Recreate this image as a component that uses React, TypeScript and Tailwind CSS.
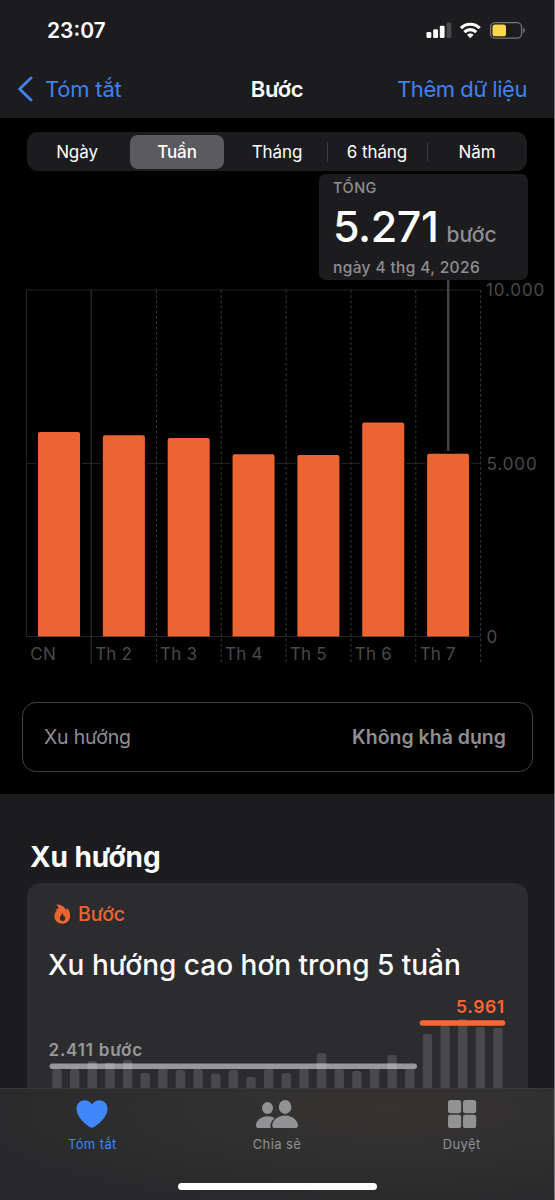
import React from 'react';

const ranges = ['Ngày', 'Tuần', 'Tháng', '6 tháng', 'Năm'];

const days = [
  { label: 'CN', steps: 5900 },
  { label: 'Th 2', steps: 5810 },
  { label: 'Th 3', steps: 5730 },
  { label: 'Th 4', steps: 5260 },
  { label: 'Th 5', steps: 5235 },
  { label: 'Th 6', steps: 6175 },
  { label: 'Th 7', steps: 5271 },
];

// top edge of every weekly bar, measured inside the card chart
const trendTops = [
  69, 69, 61, 63, 60, 73, 67, 70, 69, 73.5, 70, 77, 69, 73, 66, 53, 69, 71, 66, 55, 67, 34, 25, 19, 27, 28,
];

const StatusBar = () => (
  <div className="flex h-[60px] items-center justify-between pl-[47px] pr-[28px]">
    <span className="text-[21px] font-semibold leading-none">23:07</span>
    <svg width="100" height="20" viewBox="0 0 100 20" fill="#fff">
      <rect x="0.5" y="12" width="4.8" height="6" rx="1.3" />
      <rect x="7.2" y="9.3" width="4.8" height="8.7" rx="1.3" />
      <rect x="13.8" y="5.8" width="4.8" height="12.2" rx="1.3" />
      <rect x="20.5" y="2.5" width="4.8" height="15.5" rx="1.3" fill="#48484a" />
      <g fill="none" stroke="#fff" strokeWidth="3.2">
        <path d="M34.9 8.1a13.4 13.4 0 0 1 18.8 0" />
        <path d="M38.4 12.1a8.4 8.4 0 0 1 11.8 0" />
      </g>
      <path d="M41 14.8a4.8 4.8 0 0 1 6.6 0L44.3 18.200z" />
      <rect x="64.6" y="2.6" width="31" height="15.6" rx="4.5" fill="none" stroke="#77777a" strokeWidth="1.3" />
      <rect x="66.500" y="4.500" width="13.500" height="11.800" rx="2.600" fill="#fad84a" />
      <path d="M97.2 7.8c2.2.7 2.2 4.5 0 5.2z" fill="#77777a" />
    </svg>
  </div>
);

const NavBar = () => (
  <div className="grid h-[58px] grid-cols-3 items-center pl-[17px] pr-[27px] text-[22px]">
    <div className="flex items-center gap-[11px] text-[#3f82f0]">
      <svg width="17" height="26" viewBox="0 0 17 26" fill="none" stroke="currentColor" strokeWidth="2.9" strokeLinecap="round" strokeLinejoin="round">
        <path d="M14 2L2.6 13L14 24" />
      </svg>
      <span className="whitespace-nowrap tracking-[-0.2px]">Tóm tắt</span>
    </div>
    <span className="pl-[10px] text-center font-semibold tracking-[-0.3px]">Bước</span>
    <span className="whitespace-nowrap text-right tracking-[-0.45px] text-[#3f82f0]">Thêm dữ liệu</span>
  </div>
);

const RangePicker = () => (
  <div className="mx-[27px] flex h-[39px] items-center rounded-[11px] bg-[#1c1c1f]">
    {ranges.map((range, i) => (
      <div key={range} className="relative flex w-[100.4px] justify-center text-[17px] tracking-[-0.1px]">
        {i > 2 && <span className="absolute left-0 top-[7px] h-[20px] w-px bg-[#3a3a3d]" />}
        <div
          className={`flex h-[34px] w-[94px] items-center justify-center pt-[2px] ${
            i === 1 ? 'rounded-[8px] bg-[#5b5a5f] font-medium' : ''
          }`}
        >
          {range}
        </div>
      </div>
    ))}
  </div>
);

const Callout = () => (
  <div className="ml-[319px] mt-[3px] h-[106px] w-[209px] rounded-[7px] bg-[#1c1c1e] pl-[14px] text-[#8e8e93]">
    <div className="pt-[5px] text-[14.5px] font-medium leading-[17px] tracking-[0.5px]">TỔNG</div>
    <div className="flex h-[63px] items-baseline gap-[8px]">
      <span className="text-[43px] font-medium leading-[60px] tracking-[-0.4px] text-white">5.271</span>
      <span className="text-[21px] font-medium">bước</span>
    </div>
    <div className="text-[15.5px] font-medium leading-[18px] tracking-[0.37px]">ngày 4 thg 4, 2026</div>
  </div>
);

const WeekChart = () => (
  <svg className="block" width="554" height="400" viewBox="0 280 554 400" fontFamily="Inter, sans-serif">
    <g stroke="#222224" strokeWidth="1">
      <path d="M26.5 290V637M26.5 290H480.5M26.5 463.5H480.5M26.5 636.5H480.5" />
      <path d="M91.2 290V664" stroke="#38383a" />
    </g>
    {[156.5, 221.2, 286.1, 351, 415.8, 480.6].map((x) => (
      <path key={x} d={`M${x} 290V663`} stroke="#353537" strokeDasharray="3 2.2" />
    ))}
    <path d="M448.2 280V451" stroke="#454547" strokeWidth="2.4" />
    {days.map((day, i) => {
      const x = 38 + i * 64.85;
      const height = (day.steps / 10000) * 346.5;
      return (
        <g key={day.label}>
          <rect x={x - 2} y={636.5 - height} width="46" height={height - 1} fill="#000" />
          <path d={`M${x} 636.5v${2 - height}q0-2 2-2h38q2 0 2 2v${height - 2}z`} fill="#ec6432" />
          <text x={30.3 + i * 64.9} y="660.3" fontSize="17" letterSpacing="0.2" fill="#49494c">{day.label}</text>
        </g>
      );
    })}
    <g fontSize="17" letterSpacing="0.9" fill="#49494c">
      <text x="486" y="296">10.000</text>
      <text x="486.500" y="469.5">5.000</text>
      <text x="486.500" y="643">0</text>
    </g>
  </svg>
);

const TrendCard = () => (
  <div className="ml-[27px] mt-[9px] h-[317px] w-[501px] rounded-t-[14px] bg-[#2c2c2e]">
    <div className="flex h-[62px] items-center gap-[7px] pl-[26px] text-[#ec6432]">
      <svg width="18" height="22" viewBox="0 0 18 22">
        <path
          fill="currentColor"
          fillRule="evenodd"
          d="M3.3 1.6C8.3 1.400 12 3.900 12.900 7.300c.7-.5 1-1.400 1.100-2.300C16.100 6.900 17.100 9.800 17.100 12.700c0 4.900-3.300 8-7.800 8S1.400 17.600 1.400 13.300c0-2.600 1.200-4.300 2.600-5.700-.5-.6-1.200-.9-2-.9.900-.7 2.100-.8 3.300-.5C5.400 4.500 4.700 2.800 3.300 1.600ZM9.100 9.700c.4 2.200-2.300 3.200-2.300 5.500 0 1.700 1.100 2.800 2.700 2.800s2.800-1.100 2.800-2.800c0-.9-.3-1.700-.8-2.300-.2.400-.5.700-.9.800.1-1.700-.4-3.100-1.500-4Z"
        />
      </svg>
      <span className="pt-px text-[19.5px] font-medium tracking-[-0.1px]">Bước</span>
    </div>
    <div className="h-[38px] whitespace-nowrap pl-[21px] text-[28px] font-medium leading-[40px]">
      Xu hướng cao hơn trong 5 tuần
    </div>
    <svg className="block" width="501" height="107" viewBox="27 -17 501 107" fontFamily="Inter, sans-serif" fontWeight="600">
      {trendTops.map((top, i) => (
        <rect key={i} x={52.3 + i * 17.64} y={top} width="9.4" height="100" rx="2.5" fill="#49494b" />
      ))}
      <path d="M52.3 66.3H414.3" stroke="#98989b" strokeWidth="5.4" strokeLinecap="round" />
      {[2, 3, 4, 15, 19].map((i) => (
        <rect key={i} x={52.3 + i * 17.64} y="63.6" width="9.4" height="5.4" fill="#a5a5a8" />
      ))}
      <path d="M422.5 23H502.5" stroke="#ff6634" strokeWidth="5.6" strokeLinecap="round" />
      <text x="48.500" y="56" fontSize="17" letterSpacing="0.8" fill="#98989c">2.411 bước</text>
      <text x="456" y="12.5" fontSize="17.5" letterSpacing="0.6" fill="#ff6634">5.961</text>
    </svg>
  </div>
);

const TabBar = () => (
  <div className="absolute bottom-0 left-0 h-[112px] w-[554px] border-t border-[#38383a] bg-[radial-gradient(ellipse_at_70%_20%,#373230_0%,#303031_35%,#29292b_75%)] text-[13px] text-[#929295]">
    <div className="grid h-[70px] grid-cols-3 pt-[10px]">
      <div className="flex flex-col items-center text-[#3f87fa]">
        <svg width="32" height="30" viewBox="0 0 32 30" fill="currentColor">
          <path d="M16 29C14.5 29 .5 20 .5 9.8.5 4.8 4 1.2 8.5 1.2c3.3 0 6 1.7 7.5 4.4 1.5-2.7 4.2-4.4 7.5-4.4 4.5 0 8 3.6 8 8.6C31.5 20 17.5 29 16 29Z" />
        </svg>
        <span className="mt-[6px] leading-[18px] tracking-[0.4px]">Tóm tắt</span>
      </div>
      <div className="flex flex-col items-center">
        <svg width="42" height="30" viewBox="0 0 42 30" fill="currentColor">
          <ellipse cx="11.5" cy="9" rx="5.5" ry="6" />
          <path d="M0 26.6C0 21.7 5 17.2 11.5 17.2c3 0 5.4.8 7.300 2.100-3 2.200-4.500 5.300-4.500 7.600 0 .9.200 1.600.7 2H2C.7 28.900 0 28 0 26.600Z" />
          <ellipse cx="29.1" cy="7.9" rx="6.3" ry="7" />
          <path d="M16.2 26.6c0-4.800 5.200-10 12.900-10S42 21.800 42 26.600c0 1.500-.8 2.300-2.100 2.300H18.300c-1.300 0-2.100-.8-2.100-2.300Z" />
        </svg>
        <span className="mt-[6px] leading-[18px] tracking-[0.4px]">Chia sẻ</span>
      </div>
      <div className="flex flex-col items-center">
        <svg width="30" height="30" viewBox="0 0 30 30" fill="currentColor">
          <rect x="1" y="1" width="13.2" height="13.2" rx="2.6" />
          <rect x="16" y="1" width="13.2" height="13.2" rx="2.6" />
          <rect x="1" y="15.8" width="13.2" height="13.2" rx="2.6" />
          <rect x="16" y="15.8" width="13.2" height="13.2" rx="2.6" />
        </svg>
        <span className="mt-[6px] leading-[18px] tracking-[0.4px]">Duyệt</span>
      </div>
    </div>
    <div className="ml-[178px] mt-[24px] h-[7px] w-[199px] rounded-full bg-white" />
  </div>
);

export default function App() {
  return (
    <div className="relative h-[1200px] w-[555px] overflow-hidden border-r border-[#77777a] bg-[#1c1c1e] font-['Inter',sans-serif] text-white">
      <header className="h-[118px]">
        <StatusBar />
        <NavBar />
      </header>
      <section className="h-[676px] bg-black pt-[14px]">
        <RangePicker />
        <Callout />
        <WeekChart />
        <div className="ml-[22px] mt-[22px] flex h-[70px] w-[511px] items-center justify-between rounded-[14px] border border-[#414143] pl-[21px] pr-[26px] pt-[2px] text-[19.5px] text-[#8e8e93]">
          <span className="tracking-[-0.2px]">Xu hướng</span>
          <span className="font-semibold">Không khả dụng</span>
        </div>
      </section>
      <h2 className="mt-[46px] pl-[30px] text-[28px] font-bold leading-[34px] tracking-[-0.1px]">Xu hướng</h2>
      <TrendCard />
      <TabBar />
    </div>
  );
}
